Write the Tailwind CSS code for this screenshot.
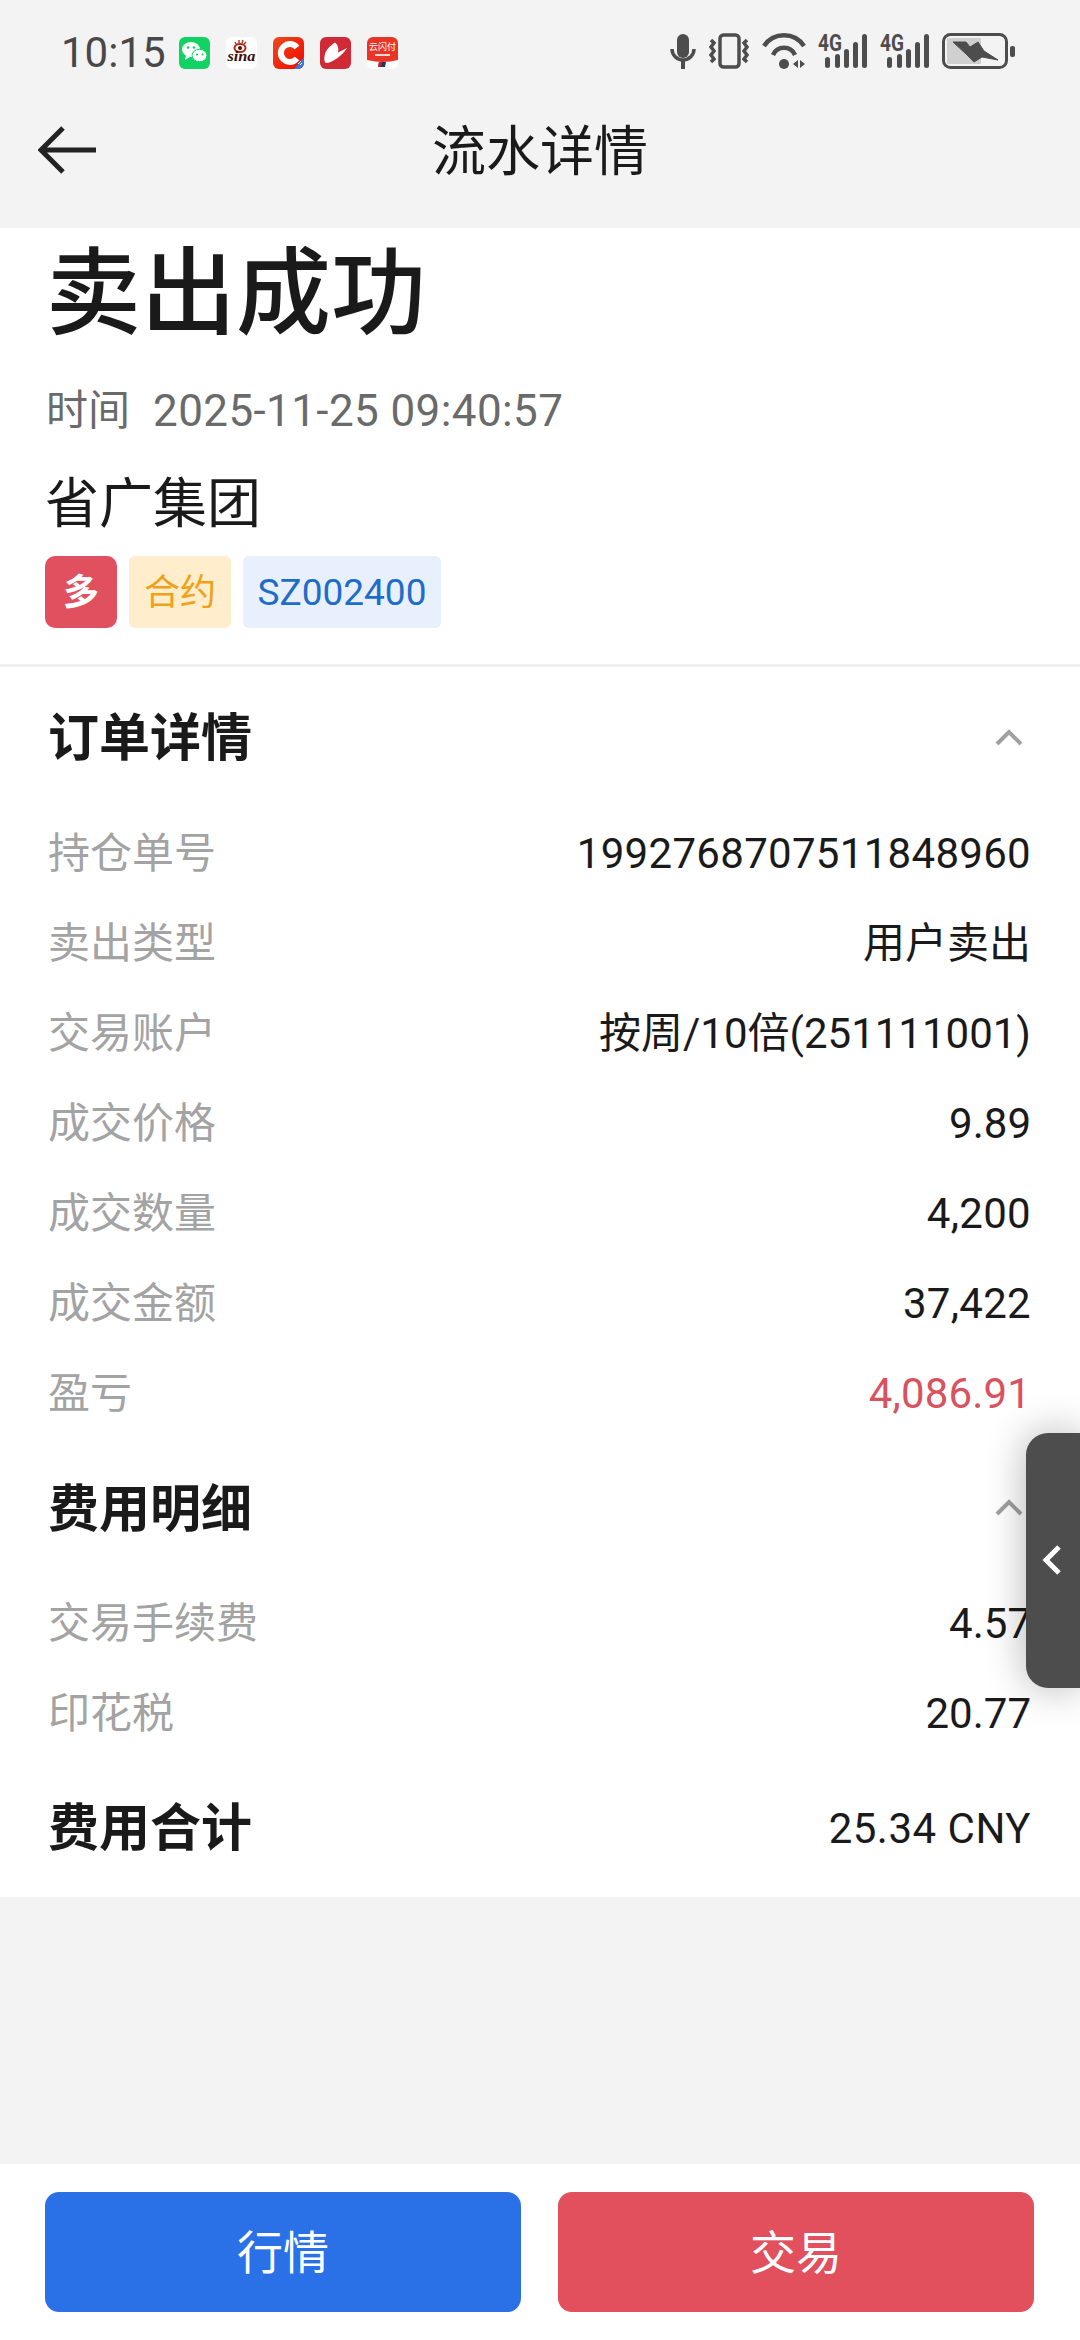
<!DOCTYPE html>
<html lang="zh-CN">
<head>
    <meta charset="UTF-8">
    <meta name="viewport" content="width=device-width, initial-scale=1.0">
    <title>流水详情</title>
    <script src="https://cdn.jsdelivr.net/npm/@tailwindcss/browser@4"></script>
</head>
<body class="bg-[#f3f3f3] font-['Roboto','Noto_Sans_CJK_SC',sans-serif] text-[#1a1a1a]">
<div class="relative w-[1080px] h-[2340px] overflow-hidden flex flex-col">

    <!-- status bar -->
    <div class="h-[72px] shrink-0 flex items-end pl-[61px] pr-[65px] text-[#484848]">
        <span class="text-[42px] leading-[42px] h-[40px] w-[118px] shrink-0">10:15</span>
        <div class="flex gap-[16px] mb-[3px]">
            <svg class="w-[31px] h-[32px]" viewBox="0 0 31 32"><rect width="31" height="32" rx="6" fill="#12d264"/><ellipse cx="12" cy="12.5" rx="9" ry="7.5" fill="#fff"/><ellipse cx="20.5" cy="18.5" rx="7.5" ry="6.2" fill="#fff" stroke="#12d264"/><path d="M7 18l-1 5 5-3z" fill="#fff"/><circle cx="9" cy="10.5" r="1.3" fill="#12d264"/><circle cx="15" cy="10.5" r="1.3" fill="#12d264"/><circle cx="18" cy="17.5" r="1.1" fill="#12d264"/><circle cx="23.5" cy="17.5" r="1.1" fill="#12d264"/></svg>
            <svg class="w-[31px] h-[32px]" viewBox="0 0 31 32"><rect width="31" height="32" rx="6" fill="#fff"/><ellipse cx="14" cy="11" rx="5.5" ry="4" fill="none" stroke="#b02a18" stroke-width="2"/><circle cx="14" cy="11" r="2" fill="#4a1008"/><path d="M9 5l1 2M13 3v3M17 3l-1 3M20 5l-2 2" stroke="#b02a18" stroke-width="1.4"/><text x="15.5" y="24" text-anchor="middle" font-family="Liberation Serif" font-size="15" font-weight="700" font-style="italic" fill="#3a0f08" textLength="28" lengthAdjust="spacingAndGlyphs">sina</text></svg>
            <svg class="w-[31px] h-[32px]" viewBox="0 0 31 32"><defs><linearGradient id="cred" x1="0" y1="0" x2="1" y2="1"><stop offset="0" stop-color="#ee4a1c"/><stop offset="1" stop-color="#f00800"/></linearGradient></defs><rect width="31" height="32" rx="6" fill="url(#cred)"/><path d="M24 10.5a9 9 0 1 0 0 11" fill="none" stroke="#fff" stroke-width="6"/><path d="M31 20v6a6 6 0 0 1-6 6h-4z" fill="#3b78d8"/><path d="M25 27l3-3M27 28l2-2" stroke="#fff" stroke-width="1"/></svg>
            <svg class="w-[31px] h-[32px]" viewBox="0 0 31 32"><rect width="31" height="32" rx="6" fill="#cf2a36"/><path d="M15 5.6C10 9 6 13 5 17C4 21 4 25 6 26C12 26 22 19 27 11L18 15.5C19 12 18 8 15 5.6Z" fill="#fff"/></svg>
            <svg class="w-[31px] h-[32px]" viewBox="0 0 31 32"><rect width="31" height="32" rx="6" fill="#fff"/><path d="M0 6a6 6 0 0 1 6-6h19a6 6 0 0 1 6 6v17q-15 4-31 0z" fill="#e93527"/><text x="15.5" y="13" text-anchor="middle" font-family="Noto Sans CJK SC" font-size="9" fill="#fff">云闪付</text><rect x="8" y="17" width="15" height="2" fill="#ffd8d0"/><path d="M12 25h7l-1 5h-7z" fill="#123a70"/><path d="M12 25h3l-1 5h-3z" fill="#c8222c"/></svg>
        </div>
        <div class="ml-auto flex items-end gap-[12px] mb-[3px] text-[#4d4d4d]">
            <svg class="w-[26px] h-[36px]" viewBox="0 0 26 36" fill="none"><rect x="7" y="1" width="12" height="24" rx="6" fill="currentColor"/><path d="M2 16a11 11 0 0 0 22 0" stroke="currentColor" stroke-width="3.5"/><path d="M13 27v9" stroke="currentColor" stroke-width="4"/></svg>
            <svg class="w-[42px] h-[36px]" viewBox="0 0 42 36" fill="none" stroke="currentColor"><rect x="12" y="2" width="19" height="32" rx="3.5" stroke-width="3.5"/><path d="M3 7l3 3-3 4 3 4-3 4 3 4-3 3M39 7l-3 3 3 4-3 4 3 4-3 4 3 3" stroke-width="3.5"/></svg>
            <svg class="w-[44px] h-[36px]" viewBox="0 0 44 36" fill="none" stroke="currentColor"><path d="M2 13a24 24 0 0 1 40 0" stroke-width="4.5"/><path d="M11 22a12 12 0 0 1 22 0" stroke-width="4.5"/><circle cx="22" cy="31" r="5" fill="currentColor" stroke="none"/><path d="M36 27v8l-5-4zM38 27v8l5-4z" fill="currentColor" stroke="none"/></svg>
            <svg class="w-[50px] h-[36px] overflow-visible" viewBox="0 0 50 36"><text x="0" y="18" font-family="Roboto" font-size="23" font-weight="700" fill="currentColor" textLength="24" lengthAdjust="spacingAndGlyphs">4G</text><g fill="currentColor"><rect x="7" y="24" width="5" height="11" rx="2.5"/><rect x="17" y="21" width="5" height="14" rx="2.5"/><rect x="26" y="16" width="5" height="19" rx="2.5"/><rect x="35" y="9" width="5" height="26" rx="2.5"/><rect x="44" y="1" width="5" height="34" rx="2.5"/></g></svg>
            <svg class="w-[50px] h-[36px] overflow-visible" viewBox="0 0 50 36"><text x="0" y="18" font-family="Roboto" font-size="23" font-weight="700" fill="currentColor" textLength="24" lengthAdjust="spacingAndGlyphs">4G</text><g fill="currentColor"><rect x="7" y="24" width="5" height="11" rx="2.5"/><rect x="17" y="21" width="5" height="14" rx="2.5"/><rect x="26" y="16" width="5" height="19" rx="2.5"/><rect x="35" y="9" width="5" height="26" rx="2.5"/><rect x="44" y="1" width="5" height="34" rx="2.5"/></g></svg>
            <svg class="w-[73px] h-[36px]" viewBox="0 0 73 36"><rect x="5" y="5" width="34" height="26" fill="#d0d0d0"/><rect x="1.5" y="1.5" width="63" height="33" rx="7" fill="none" stroke="currentColor" stroke-width="3"/><rect x="68" y="13" width="5" height="11" rx="2" fill="currentColor"/><path d="M11 9H24L28 14L36 9L42 18L56 27L40 24L32 29L24 21Z" fill="currentColor" stroke="currentColor"/></svg>
        </div>
    </div>

    <!-- nav -->
    <div class="h-[156px] shrink-0 relative flex items-center justify-center">
        <svg class="absolute left-[38px] top-[53px] w-[60px] h-[50px]" viewBox="0 0 60 50" fill="none" stroke="#222" stroke-width="5"><path d="M3 25h55M25 3L3 25l22 22"/></svg>
        <span class="text-[54px] leading-[60px] mt-[5px]">流水详情</span>
    </div>

    <!-- head card -->
    <div class="bg-white shrink-0 pl-[46px] border-b-[3px] border-[#efefef] pb-[36px]">
        <div class="text-[95px] h-[128px] leading-[134px] font-medium">卖出成功</div>
        <div class="mt-[25px] text-[42px] leading-[60px] text-[#6a6a6a] flex gap-[23px]"><span>时间</span><span class="text-[44px] tracking-[0.4px]">2025-11-25 09:40:57</span></div>
        <div class="mt-[34px] -ml-[1px] text-[54px] leading-[60px]">省广集团</div>
        <div class="mt-[21px] flex gap-[12px] -ml-[1px]">
            <span class="w-[72px] h-[72px] pt-[2px] rounded-[10px] bg-[#e0505e] text-white text-[36px] font-bold flex items-center justify-center">多</span>
            <span class="w-[102px] h-[72px] pt-[2px] rounded-[6px] bg-[#ffedcc] text-[#eea21a] text-[36px] flex items-center justify-center">合约</span>
            <span class="w-[198px] h-[72px] pt-[2px] rounded-[6px] bg-[#e7f0fc] text-[#1f6cc8] text-[37px] flex items-center justify-center">SZ002400</span>
        </div>
    </div>

    <!-- details -->
    <div class="bg-white shrink-0 pl-[48px] pr-[49px]">
        <div class="h-[140px] flex items-center justify-between">
            <span class="text-[51px] font-bold pt-[5px]">订单详情</span>
            <svg class="w-[28px] h-[18px] mr-[8px]" viewBox="0 0 28 18" fill="none" stroke="#a0a0a0" stroke-width="4"><path d="M2 16L14 4l12 12"/></svg>
        </div>
        <div class="h-[90px] pt-[2px] flex items-center justify-between text-[42px]"><span class="text-[#a3a3a3]">持仓单号</span><span class="tracking-[0.3px]">1992768707511848960</span></div>
        <div class="h-[90px] pt-[2px] flex items-center justify-between text-[42px]"><span class="text-[#a3a3a3]">卖出类型</span><span>用户卖出</span></div>
        <div class="h-[90px] pt-[2px] flex items-center justify-between text-[42px]"><span class="text-[#a3a3a3]">交易账户</span><span>按周/10倍(251111001)</span></div>
        <div class="h-[90px] pt-[2px] flex items-center justify-between text-[42px]"><span class="text-[#a3a3a3]">成交价格</span><span>9.89</span></div>
        <div class="h-[90px] pt-[2px] flex items-center justify-between text-[42px]"><span class="text-[#a3a3a3]">成交数量</span><span class="tracking-[0.3px]">4,200</span></div>
        <div class="h-[90px] pt-[2px] flex items-center justify-between text-[42px]"><span class="text-[#a3a3a3]">成交金额</span><span class="tracking-[0.3px]">37,422</span></div>
        <div class="h-[90px] pt-[2px] flex items-center justify-between text-[42px]"><span class="text-[#a3a3a3]">盈亏</span><span class="text-[#d9525f] tracking-[0.15px]">4,086.91</span></div>

        <div class="h-[140px] flex items-center justify-between">
            <span class="text-[51px] font-bold pt-[7px]">费用明细</span>
            <svg class="w-[28px] h-[18px] mr-[8px]" viewBox="0 0 28 18" fill="none" stroke="#a0a0a0" stroke-width="4"><path d="M2 16L14 4l12 12"/></svg>
        </div>
        <div class="h-[90px] pt-[2px] flex items-center justify-between text-[42px]"><span class="text-[#a3a3a3]">交易手续费</span><span>4.57</span></div>
        <div class="h-[90px] pt-[2px] flex items-center justify-between text-[42px]"><span class="text-[#a3a3a3]">印花税</span><span>20.77</span></div>
        <div class="h-[140px] flex items-center justify-between">
            <span class="text-[51px] font-bold pt-[5px]">费用合计</span>
            <span class="text-[42px] tracking-[0.5px] pt-[2px]">25.34 CNY</span>
        </div>
    </div>

    <div class="flex-1"></div>

    <!-- bottom actions -->
    <div class="bg-white h-[176px] shrink-0 pt-[28px] pl-[45px] pr-[46px] flex gap-[37px]">
        <div class="flex-1 h-[120px] pt-[2px] rounded-[14px] bg-[#2a70e6] text-white text-[46px] flex items-center justify-center">行情</div>
        <div class="flex-1 h-[120px] pt-[2px] rounded-[14px] bg-[#e24f5d] text-white text-[46px] flex items-center justify-center">交易</div>
    </div>

    <!-- floating side handle -->
    <div class="absolute right-0 top-[1433px] w-[54px] h-[255px] rounded-l-[22px] bg-[#4d4d4d] shadow-[0_0_40px_rgba(0,0,0,0.3)] flex items-center justify-center">
        <svg class="w-[20px] h-[32px] -mt-[2px] -ml-[2px]" viewBox="0 0 20 32" fill="none" stroke="#fff" stroke-width="5"><path d="M17 3L4 16l13 13"/></svg>
    </div>
</div>
</body>
</html>
